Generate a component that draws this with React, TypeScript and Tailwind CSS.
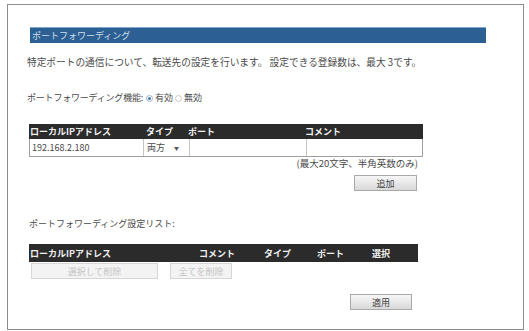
import React from 'react';

const font = { fontFamily: '"Noto Sans CJK JP", "Noto Sans", sans-serif' };

const Btn = ({ label, w, disabled }: { label: string; w: string; disabled?: boolean }) => (
    <button
        className={`${w} h-[16px] flex items-center justify-center text-[9px] leading-none border ${
            disabled
                ? 'border-[#d6d6d6] bg-[#f3f3f3] text-[#c4c4c4]'
                : 'border-[#a9a9a9] bg-gradient-to-b from-[#f7f7f7] to-[#d9d9d9] text-[#444]'
        }`}
    >
        {label}
    </button>
);

const App = () => {
    return (
        <div className="w-[529px] h-[331px] bg-white pl-[7px] pt-[4px]" style={font}>
            <div className="w-[517px] h-[326px] border border-[#8c8c8c] pl-[21px] pt-[22px] text-[#4a4a4a]">
                {/* Title bar */}
                <div className="ml-[1px] w-[456px] h-[16px] bg-[#2c5f93] border-t border-[#7fa6cc] flex items-center pl-[2px]">
                    <span className="text-[9px] leading-none text-[#d3e0ee]">ポートフォワーディング</span>
                </div>

                <p className="-ml-[2px] mt-[12px] text-[9.7px] leading-[14px] whitespace-nowrap">
                    特定ポートの通信について、転送先の設定を行います。 設定できる登録数は、最大 3です。
                </p>

                {/* Enable switch */}
                <div className="-ml-[2px] mt-[22px] h-[14px] flex items-center text-[9px] whitespace-nowrap">
                    <span className="tracking-[-0.2px]">ポートフォワーディング機能:</span>
                    <span className="ml-[3px] w-[7px] h-[7px] rounded-full border border-[#9fb4c8] bg-white flex items-center justify-center">
                        <span className="w-[3px] h-[3px] rounded-full bg-[#3a78b8]" />
                    </span>
                    <span className="ml-[2px]">有効</span>
                    <span className="ml-[2px] w-[7px] h-[7px] rounded-full border border-[#c8c8c8] bg-white" />
                    <span className="ml-[2px]">無効</span>
                </div>

                {/* Entry table */}
                <div className="mt-[19px] w-[394px]">
                    <div className="h-[15px] bg-[#2b2b2b] flex items-center text-[9px] font-bold text-[#f0f0f0] leading-none">
                        <span className="w-[117px] pl-[1px]">ローカルIPアドレス</span>
                        <span className="w-[42px]">タイプ</span>
                        <span className="w-[117px]">ポート</span>
                        <span>コメント</span>
                    </div>
                    <div className="h-[18px] flex border border-t-0 border-[#a0a0a0] text-[9px]">
                        <div className="w-[114px] border-r border-[#c4c4c4] flex items-center pl-[2px]">192.168.2.180</div>
                        <div className="w-[46px] border-r border-[#c4c4c4] flex items-center pl-[3px] gap-[9px]">
                            <span>両方</span>
                            <span className="text-[5px] text-[#555]">▼</span>
                        </div>
                        <div className="w-[117px] border-r border-[#c4c4c4]" />
                        <div className="flex-1" />
                    </div>
                </div>
                <div className="w-[389px] h-[12px] flex items-center justify-end text-[9.5px] whitespace-nowrap">
                    (最大20文字、半角英数のみ)
                </div>
                <div className="w-[388px] mt-[6px] flex justify-end">
                    <Btn label="追加" w="w-[63px]" />
                </div>

                <p className="mt-[26px] h-[14px] flex items-center text-[9px]">ポートフォワーディング設定リスト:</p>

                {/* List table */}
                <div className="mt-[13px] w-[389px] h-[18px] bg-[#2b2b2b] flex items-center text-[9px] font-bold text-[#f0f0f0] leading-none">
                    <span className="w-[170px] pl-[1px]">ローカルIPアドレス</span>
                    <span className="w-[65px]">コメント</span>
                    <span className="w-[53px]">タイプ</span>
                    <span className="w-[55px]">ポート</span>
                    <span>選択</span>
                </div>
                <div className="mt-[1px] flex gap-[12px] pl-[2px]">
                    <Btn label="選択して削除" w="w-[127px]" disabled />
                    <Btn label="全てを削除" w="w-[62px]" disabled />
                </div>

                <div className="w-[383px] mt-[15px] flex justify-end">
                    <Btn label="適用" w="w-[62px]" />
                </div>
            </div>
        </div>
    );
};

export default App;
